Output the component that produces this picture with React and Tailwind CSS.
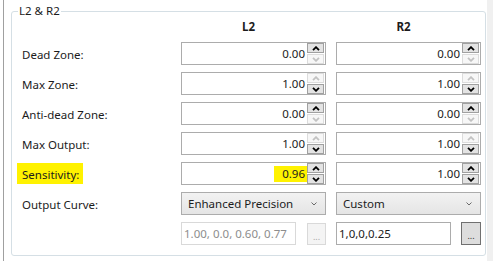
import React from "react";

const font = { fontFamily: '"Noto Sans", "Open Sans", sans-serif' };

function Arrow({ dir, on }) {
  return (
    <div className={`h-[10px] flex items-center justify-center border ${on ? "border-[#a0a0a0] bg-[#e3e3e3]" : "border-[#dcdcdc] bg-[#f7f7f7]"}`}>
      <svg width="8" height="5" viewBox="0 0 8 5">
        <polyline
          points={dir === "up" ? "1,4.2 4,1.2 7,4.2" : "1,0.8 4,3.8 7,0.8"}
          fill="none"
          stroke={on ? "#000" : "#c2c2c2"}
          strokeWidth="1.8"
        />
      </svg>
    </div>
  );
}

function Spin({ value, up, down, mark }) {
  return (
    <div className="h-[23px] border border-[#acacac] bg-white flex items-center justify-end pr-px">
      <span className={`text-[11.5px] leading-[16px] text-[#1c1c1c] pr-[2px] ${mark ? "bg-[#fff200] pl-[8px]" : ""}`}>{value}</span>
      <div className="flex flex-col gap-px w-[17px]">
        <Arrow dir="up" on={up} />
        <Arrow dir="down" on={down} />
      </div>
    </div>
  );
}

function Combo({ text }) {
  return (
    <div className="h-[23px] border border-[#acacac] bg-gradient-to-b from-[#f2f2f2] to-[#e5e5e5] flex items-center justify-between pl-[6px] pr-[8px]">
      <span className="text-[11.5px] text-[#1c1c1c]">{text}</span>
      <svg width="6" height="4" viewBox="0 0 6 4">
        <polyline points="0.5,0.5 3,3 5.5,0.5" fill="none" stroke="#6a6a6a" strokeWidth="1" />
      </svg>
    </div>
  );
}

const rows = [
  { label: "Dead Zone:", l: ["0.00", true, false], r: ["0.00", true, false] },
  { label: "Max Zone:", l: ["1.00", false, true], r: ["1.00", false, true] },
  { label: "Anti-dead Zone:", l: ["0.00", true, false], r: ["0.00", true, false] },
  { label: "Max Output:", l: ["1.00", false, true], r: ["1.00", false, true] },
  { label: "Sensitivity:", l: ["0.96", true, true], r: ["1.00", true, true], mark: true },
];

export default function App() {
  return (
    <div className="w-[493px] h-[261px] bg-white flex" style={font}>
      <div className="w-[3px]" />
      <div className="w-px bg-[#a0a0a0]" />
      <div className="w-[483px] pl-[7px] pt-[3px]">
        <fieldset className="w-[475px] border border-[#d5dfe5] rounded-[3px] pb-[10px]">
          <legend className="ml-[6px] px-[1px] text-[11.5px] leading-[16px] text-[#1c1c1c]">L2 &amp; R2</legend>
          <div className="grid grid-cols-[159px_145px_145px] gap-x-[10px] gap-y-[7px]">
            <div />
            <div className="h-[16px] text-center text-[11.5px] leading-[16px] font-bold text-[#1c1c1c] pr-[10px]">L2</div>
            <div className="h-[16px] text-center text-[11.5px] leading-[16px] font-bold text-[#1c1c1c] pr-[10px]">R2</div>

            {rows.map((row) => (
              <React.Fragment key={row.label}>
                <div className="h-[23px] flex items-center pl-[10px] text-[11.5px] text-[#1c1c1c]">
                  <span className={`pt-[3px] ${row.mark ? "bg-[#fff200] -ml-[5px] pl-[5px] pr-[4px] pb-[1px]" : ""}`}>{row.label}</span>
                </div>
                <Spin value={row.l[0]} up={row.l[1]} down={row.l[2]} mark={row.mark} />
                <Spin value={row.r[0]} up={row.r[1]} down={row.r[2]} />
              </React.Fragment>
            ))}

            <div className="h-[23px] flex items-center pl-[10px] text-[11.5px] text-[#1c1c1c]">
              <span className="pt-[3px]">Output Curve:</span>
            </div>
            <Combo text="Enhanced Precision" />
            <Combo text="Custom" />

            <div />
            <div className="h-[23px] flex items-center gap-[11px]">
              <div className="w-[115px] h-[23px] border border-[#d9d9d9] flex items-center pl-[2px] text-[11.5px] text-[#8d8d8d]">1.00, 0.0, 0.60, 0.77</div>
              <div className="w-[19px] h-[22px] mt-px border border-[#d9d9d9] bg-[#f4f4f4] flex items-end justify-center pb-[3px] text-[9px] leading-[9px] text-[#a8a8a8]">...</div>
            </div>
            <div className="h-[23px] flex items-center gap-[10px]">
              <div className="w-[115px] h-[23px] border border-[#acacac] flex items-center pl-[2px] text-[11.5px] text-[#1c1c1c]">1,0,0,0.25</div>
              <div className="w-[20px] h-[23px] border border-[#707070] bg-[#dddddd] flex items-end justify-center pb-[4px] text-[9px] leading-[9px] text-[#333]">...</div>
            </div>
          </div>
        </fieldset>
      </div>
      <div className="w-[6px] bg-[#f0f0f0]" />
    </div>
  );
}
